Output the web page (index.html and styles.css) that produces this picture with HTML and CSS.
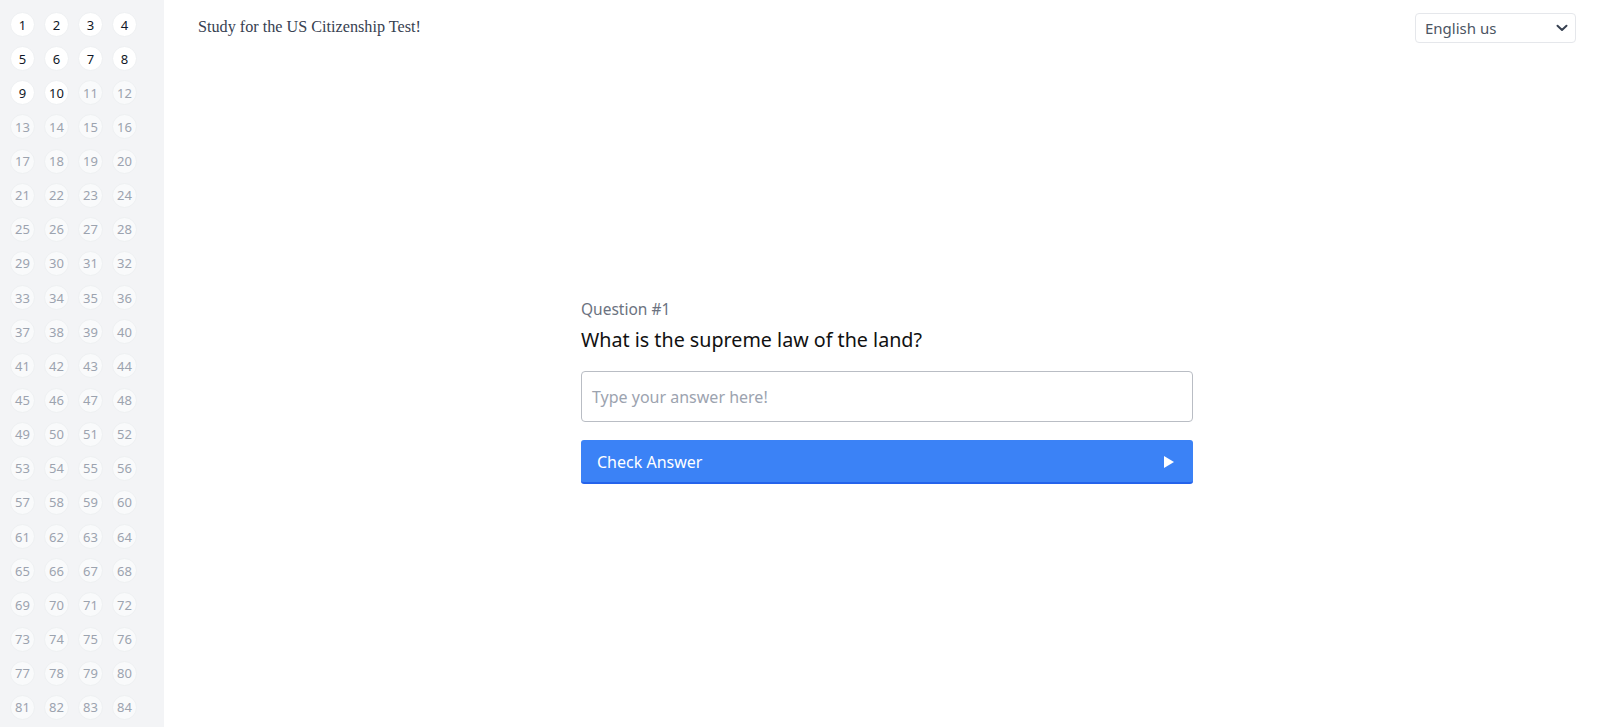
FILE: index.html
```html
<!DOCTYPE html>
<html lang="en">
<head>
<meta charset="utf-8">
<title>Study for the US Citizenship Test!</title>
<link rel="stylesheet" href="styles.css">
</head>
<body>
<div class="layout">
  <aside class="sidebar">
    <div class="grid" id="grid"></div>
  </aside>
  <main class="main">
    <header class="topbar">
      <h1 class="title">Study for the US Citizenship Test!</h1>
      <div class="select">
        <span class="select-text">English us</span>
        <svg class="chev" width="12" height="8" viewBox="0 0 12 8"><path d="M1.5 1.8 L6 6 L10.5 1.8" fill="none" stroke="#374151" stroke-width="2" stroke-linecap="round" stroke-linejoin="round"/></svg>
      </div>
    </header>
    <section class="center">
      <div class="card">
        <div class="qlabel">Question #1</div>
        <div class="qtext">What is the supreme law of the land?</div>
        <div class="input">Type your answer here!</div>
        <div class="btn">
          <span>Check Answer</span>
          <svg width="12" height="14" viewBox="0 0 12 14"><path d="M1 1 L11 7 L1 13 Z" fill="#fff"/></svg>
        </div>
      </div>
    </section>
  </main>
</div>
<script src="script.js"></script>
</body>
</html>
```
FILE: script.js
```js
var g = document.getElementById('grid');
for (var i = 1; i <= 84; i++) {
  var d = document.createElement('div');
  d.className = i <= 10 ? 'dot active' : 'dot';
  d.textContent = i;
  g.appendChild(d);
}
```
FILE: styles.css
```css
html, body { margin: 0; padding: 0; }
body {
  font-family: "Noto Sans", "Open Sans", sans-serif;
  background: #fff;
  height: 727px;
  overflow: hidden;
}
.layout { display: flex; height: 727px; }
.sidebar {
  width: 164px;
  flex: none;
  background: #f3f4f6;
  padding: 12px 0 0 10px;
  box-sizing: border-box;
}
.grid {
  display: grid;
  grid-template-columns: repeat(4, 25px);
  column-gap: 9px;
  row-gap: 9.15px;
}
.dot {
  width: 25px; height: 25px;
  border-radius: 50%;
  background: #f9fafb;
  color: #9ca3af;
  font-size: 13px;
  display: flex; align-items: center; justify-content: center;
  box-sizing: border-box;
  border: 1px solid #eef0f2;
}
.dot.active { background: #fff; color: #111827; }
.main { flex: 1; display: flex; flex-direction: column; }
.topbar {
  display: flex; justify-content: space-between; align-items: flex-start;
  padding: 13px 24px 0 34px;
}
.title {
  margin: 5px 0 0;
  font-family: "Liberation Serif", serif;
  font-weight: normal;
  font-size: 16.2px;
  color: #374151;
}
.select {
  width: 161px; height: 30px; box-sizing: border-box;
  border: 1px solid #e5e7eb; border-radius: 4px;
  display: flex; align-items: center; justify-content: space-between;
  padding: 0 7px 0 9px;
  font-size: 15px; color: #4b5563;
}
.center {
  display: flex; justify-content: center;
  padding: 255px 0 0 10px;
}
.card { width: 612px; }
.qlabel { font-size: 15.5px; color: #6b7280; line-height: 22px; }
.qtext { font-size: 19.7px; color: #111; line-height: 26px; margin-top: 7px; }
.input {
  margin-top: 18px;
  height: 51px; box-sizing: border-box;
  border: 1px solid #b9bdc4; border-radius: 4px;
  padding: 0 10px;
  display: flex; align-items: center;
  font-size: 16px; color: #9ca3af;
}
.btn {
  margin-top: 18px;
  height: 44px; box-sizing: border-box;
  background: #3b82f6; border-radius: 3px;
  border-bottom: 2px solid #2563eb;
  display: flex; align-items: center; justify-content: space-between;
  padding: 2px 18px 0 16px;
  color: #fff; font-size: 16px;
}
```
